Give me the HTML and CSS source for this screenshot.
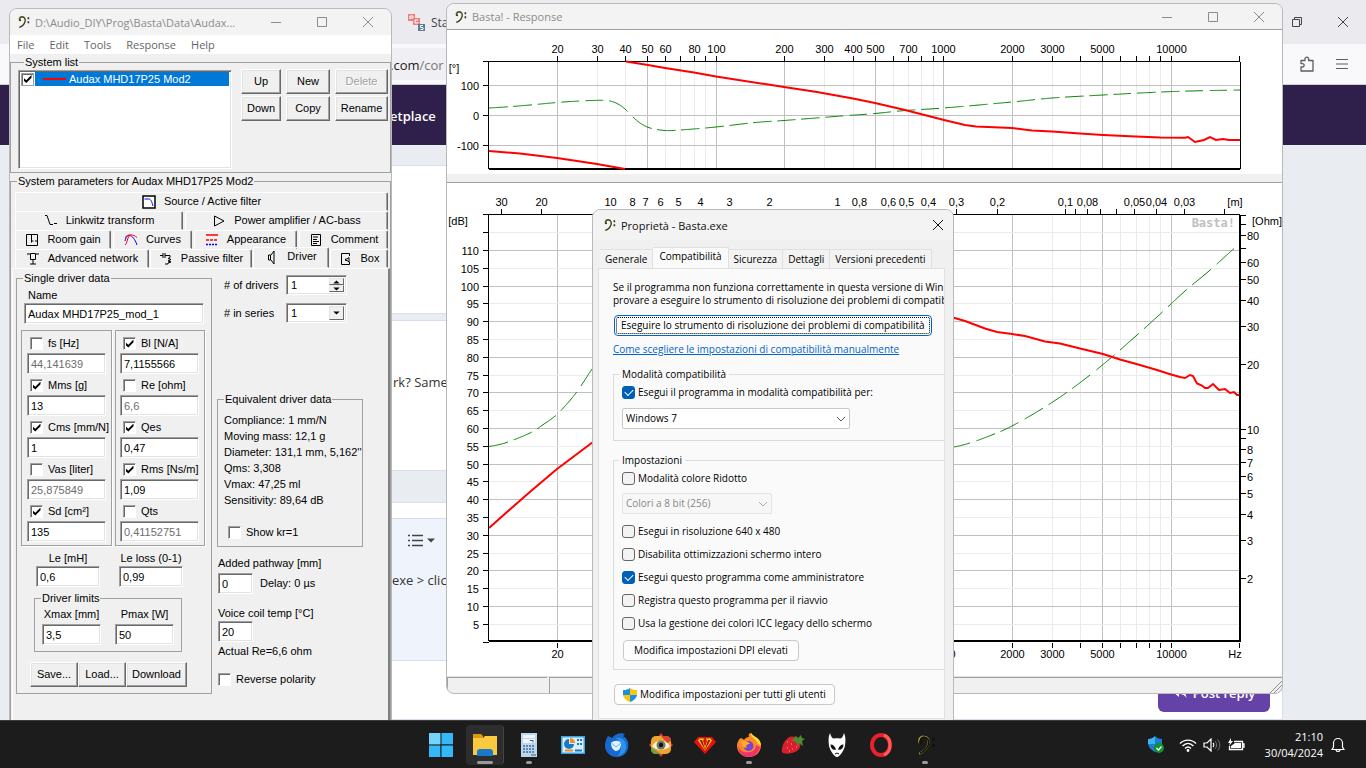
FILE: index.html
```html
<!DOCTYPE html>
<html lang="it">
<head>
<meta charset="utf-8">
<title>Basta!</title>
<link rel="stylesheet" href="styles.css">
</head>
<body>
<svg class="defs" aria-hidden="true">
  <symbol id="clef" viewBox="0 0 16 16">
    <path d="M3 6.5C1.6 3 4 1 6.5 1.3C10 1.6 10.800 5 9.500 8.500C8.500 11 6 13.500 2.500 15" fill="none" stroke="#b9a827" stroke-width="1.600"/>
    <path d="M3.600 6.500C2.500 3.500 4.500 1.600 6.500 1.700C9.800 2 10.800 5 9.800 8C8.800 11 6.500 13.300 3 14.600" fill="none" stroke="currentColor" stroke-width="1.300"/>
    <circle cx="3.800" cy="5.800" r="1.200" fill="currentColor"/>
    <path d="M13 2h2v2.500h-2zM13 7h2v2.500h-2z" fill="currentColor"/>
  </symbol>
  <symbol id="cross" viewBox="0 0 12 12"><path d="M1 1L11 11M11 1L1 11" fill="none" stroke="currentColor"/></symbol>
  <symbol id="minimize" viewBox="0 0 12 12"><path d="M1 6.500H11" fill="none" stroke="currentColor"/></symbol>
  <symbol id="maximize" viewBox="0 0 12 12"><path d="M1.500 1.500h9v9h-9z" fill="none" stroke="currentColor"/></symbol>
  <symbol id="chevron" viewBox="0 0 10 10"><path d="M1 3l4 4 4-4" fill="none" stroke="currentColor"/></symbol>
</svg>

<main class="desktop">
  <section class="browser" aria-label="Browser">
    <div class="tabstrip">
      <div class="browser-tab">
        <svg width="17" height="17" viewBox="0 0 17 17"><path d="M0 0h7v7H0zM5 4h7v7H5z" fill="#ee8080"/><path d="M10 10h7v7h-7z" fill="#5c7d99"/><path d="M2 5V2h3v2H2M10 6H7v3h3V8M15 11.500h-2.500v2H15v2h-2.500" fill="none" stroke="#fff"/></svg>
        <span>Sta</span>
      </div>
      <div class="browser-controls">
        <button aria-label="Restore"><svg width="12" height="12" viewBox="0 0 12 12"><path d="M1.500 3.500h7v7h-7zM3.500 3V1.500h7v7H9" fill="none" stroke="currentColor"/></svg></button>
        <button aria-label="Close browser"><svg width="12" height="12"><use href="#cross"/></svg></button>
      </div>
    </div>
    <div class="toolbar">
      <span class="address">.com<i>/cor</i></span>
      <div class="toolbar-icons">
        <button aria-label="Extensions"><svg width="16" height="16" viewBox="0 0 16 16"><path d="M2 4.500h4V3a1.800 1.800 0 0 1 3.600 0v1.500H14v10.500H2v-4h1.500a1.700 1.700 0 0 0 0-3.400H2z" fill="none" stroke="currentColor" stroke-width="1.300" stroke-linejoin="round"/></svg></button>
        <button aria-label="Menu"><svg width="14" height="12" viewBox="0 0 14 12"><path d="M1 1.500h12M1 6h12M1 10.500h12" stroke="currentColor"/></svg></button>
      </div>
    </div>
    <nav class="site-header"><a href="#">etplace</a></nav>
    <div class="page">
      <div class="post post-top"></div>
      <div class="post post-mid">rk? Same</div>
      <div class="post post-editor">
        <div class="editor">
          <button class="list-button" aria-label="List"><svg width="28" height="14" viewBox="0 0 28 14"><path d="M0 1.500h2M0 6.500h2M0 11.500h2M4 1.500h11M4 6.500h11M4 11.500h11" stroke="currentColor" stroke-width="1.500"/><path d="M19 4.500h8l-4 4z" fill="currentColor"/></svg></button>
          <p>exe &gt; click</p>
        </div>
        <button class="reply"><svg width="14" height="12" viewBox="0 0 14 12"><path d="M0 5l6-5v3c5 0 7 3 7.500 8C12 8.500 10 7 6 7v3z" fill="currentColor"/></svg>Post reply</button>
      </div>
    </div>
  </section>

  <section class="window main-window" aria-label="Basta main window">
    <header class="titlebar">
      <svg class="title-icon"><use href="#clef"/></svg>
      <h1>D:\Audio_DIY\Prog\Basta\Data\Audax...</h1>
      <button aria-label="Minimize"><svg><use href="#minimize"/></svg></button>
      <button aria-label="Maximize"><svg><use href="#maximize"/></svg></button>
      <button aria-label="Close"><svg><use href="#cross"/></svg></button>
    </header>
    <nav class="menu"><a href="#">File</a><a href="#">Edit</a><a href="#">Tools</a><a href="#">Response</a><a href="#">Help</a></nav>
    <div class="classic">
      <fieldset class="system-list">
        <legend>System list</legend>
        <div class="listbox sunken">
          <label class="list-row"><input type="checkbox" class="tick" checked><span class="selected"><i></i>Audax MHD17P25 Mod2</span></label>
        </div>
        <div class="list-buttons">
          <button>Up</button><button>New</button><button disabled>Delete</button>
          <button>Down</button><button>Copy</button><button>Rename</button>
        </div>
      </fieldset>
      <fieldset class="parameters">
        <legend>System parameters for Audax MHD17P25 Mod2</legend>
        <div class="tabs">
          <div class="tab-row row-one">
            <button><svg viewBox="0 0 14 14"><path d="M1 1h12v12H1z" fill="#fff" stroke="#000" stroke-width="1.500"/><path d="M2.500 4h4c3 0 3.500 4 4.500 7" fill="none" stroke="#00f"/></svg>Source / Active filter</button>
          </div>
          <div class="tab-row row-two">
            <button><svg viewBox="0 0 14 14"><path d="M1 1.500h2l3 9h2M8 10.500h1m1-1h3" fill="none" stroke="#000"/></svg>Linkwitz transform</button>
            <button><svg viewBox="0 0 14 14"><path d="M2.500 2v10L12 7z" fill="none" stroke="#000"/></svg>Power amplifier / AC-bass</button>
          </div>
          <div class="tab-row row-three">
            <button><svg viewBox="0 0 14 14"><path d="M1.500 1.500h11v11h-11zM6.500 2v7.500M6.500 8h2M10 8h3" fill="none" stroke="#000"/></svg>Room gain</button>
            <button><svg viewBox="0 0 14 14"><path d="M1 8C2 3 4 2 6 2.500S11 6 13 12" fill="none" stroke="#00f"/><path d="M1 4.500C4 1 9 1 13 4.500M1 12C3 11 3 6 5 3" fill="none" stroke="red"/></svg>Curves</button>
            <button><svg viewBox="0 0 14 14"><path d="M1 2h12M1 7h3m1 0h3m1 0h3" stroke="red" stroke-width="1.500"/><path d="M1 11.500h2m1 0h2m1 0h2m1 0h2" stroke="#00f" stroke-width="1.500"/></svg>Appearance</button>
            <button><svg viewBox="0 0 14 14"><path d="M2.500 1.500h9v11h-9zM4 4h5M4 6.500h4M4 8.500h6M4 10.500h4" fill="none" stroke="#000"/></svg>Comment</button>
          </div>
          <div class="tab-row row-four">
            <button><svg viewBox="0 0 14 14"><path d="M1 2h3m6 0h3M4.500 1.500h5v6h-5zM7 8v4M4 12h6" fill="none" stroke="#000"/></svg>Advanced network</button>
            <button><svg viewBox="0 0 14 14"><path d="M1 3.500h3m0-2.500v5m2-5v5m0-2.500h5v2l-2 1 3 1-3 1.500 3 1-3 1v1h-3" fill="none" stroke="#000"/></svg>Passive filter</button>
            <button class="active"><svg viewBox="0 0 14 14"><path d="M3.500 5h2v5h-2zM6 5l3-4v13L6 10" fill="none" stroke="#000"/></svg>Driver</button>
            <button><svg viewBox="0 0 14 14"><path d="M10.500 4V1.500h-8v11h8V10M10 5.500L8 7h-1.500v1.500H8l2 1.500z" fill="none" stroke="#000"/></svg>Box</button>
          </div>
        </div>
        <div class="driver-page">
          <fieldset class="driver-data">
            <legend>Single driver data</legend>
            <label class="name-field">Name<input class="sunken" value="Audax MHD17P25_mod_1"></label>
            <div class="values">
              <div class="value-column">
                <div><label><input type="checkbox" class="tick">fs [Hz]</label><input class="sunken" aria-label="fs" value="44,141639" disabled></div>
                <div><label><input type="checkbox" class="tick" checked>Mms [g]</label><input class="sunken" aria-label="Mms" value="13"></div>
                <div><label><input type="checkbox" class="tick" checked>Cms [mm/N]</label><input class="sunken" aria-label="Cms" value="1"></div>
                <div><label><input type="checkbox" class="tick">Vas [liter]</label><input class="sunken" aria-label="Vas" value="25,875849" disabled></div>
                <div><label><input type="checkbox" class="tick" checked>Sd [cm²]</label><input class="sunken" aria-label="Sd" value="135"></div>
              </div>
              <div class="value-column">
                <div><label><input type="checkbox" class="tick" checked>Bl [N/A]</label><input class="sunken" aria-label="Bl" value="7,1155566"></div>
                <div><label><input type="checkbox" class="tick">Re [ohm]</label><input class="sunken" aria-label="Re" value="6,6" disabled></div>
                <div><label><input type="checkbox" class="tick" checked>Qes</label><input class="sunken" aria-label="Qes" value="0,47"></div>
                <div><label><input type="checkbox" class="tick" checked>Rms [Ns/m]</label><input class="sunken" aria-label="Rms" value="1,09"></div>
                <div><label><input type="checkbox" class="tick">Qts</label><input class="sunken" aria-label="Qts" value="0,41152751" disabled></div>
              </div>
            </div>
            <div class="pair inductance">
              <label>Le [mH]<input class="sunken" value="0,6"></label>
              <label>Le loss (0-1)<input class="sunken" value="0,99"></label>
            </div>
            <fieldset class="limits">
              <legend>Driver limits</legend>
              <div class="pair">
                <label>Xmax [mm]<input class="sunken" value="3,5"></label>
                <label>Pmax [W]<input class="sunken" value="50"></label>
              </div>
            </fieldset>
            <div class="file-buttons"><button>Save...</button><button>Load...</button><button>Download</button></div>
          </fieldset>
          <div class="side">
            <div class="counts">
              <label for="drivers"># of drivers</label>
              <div class="combo sunken"><input id="drivers" value="1"><span class="spin"><button aria-label="More"><svg viewBox="0 0 8 5"><path d="M0 4.500h8L4 .5z"/></svg></button><button aria-label="Less"><svg viewBox="0 0 8 5"><path d="M0 .5h8L4 4.500z"/></svg></button></span></div>
              <label for="series"># in series</label>
              <div class="combo sunken"><select id="series"><option>1</option></select><span class="drop"><svg viewBox="0 0 8 5"><path d="M0 .5h8L4 4.500z"/></svg></span></div>
            </div>
            <fieldset class="equivalent">
              <legend>Equivalent driver data</legend>
              <p>Compliance: 1 mm/N</p><p>Moving mass: 12,1 g</p><p>Diameter: 131,1 mm, 5,162''</p><p>Qms: 3,308</p><p>Vmax: 47,25 ml</p><p>Sensitivity: 89,64 dB</p>
              <label><input type="checkbox" class="tick">Show kr=1</label>
            </fieldset>
            <div class="extras">
              <label for="path">Added pathway [mm]</label>
              <div class="delay"><input id="path" class="sunken" value="0"><span>Delay: 0 µs</span></div>
              <label for="temp">Voice coil temp [°C]</label>
              <input id="temp" class="sunken" value="20">
              <p>Actual Re=6,6 ohm</p>
              <label class="polarity"><input type="checkbox" class="tick">Reverse polarity</label>
            </div>
          </div>
        </div>
      </fieldset>
    </div>
  </section>

  <section class="window response-window" aria-label="Basta response">
    <header class="titlebar">
      <svg class="title-icon"><use href="#clef"/></svg>
      <h2>Basta! - Response</h2>
      <button aria-label="Minimize"><svg><use href="#minimize"/></svg></button>
      <button aria-label="Maximize"><svg><use href="#maximize"/></svg></button>
      <button aria-label="Close"><svg><use href="#cross"/></svg></button>
    </header>
    <svg class="chart" id="phase" viewBox="0 0 835 144" role="img" aria-label="Phase"></svg>
    <div class="splitter"></div>
    <svg class="chart" id="level" viewBox="0 0 835 493" role="img" aria-label="Sound level and impedance"></svg>
    <footer class="status"><span></span><span><svg width="12" height="12" viewBox="0 0 12 12"><path d="M0 12L12 0M4 12l8-8M8 12l4-4" stroke="#909090"/></svg></span></footer>
  </section>

  <section class="window properties" aria-label="Proprietà">
    <header class="titlebar">
      <svg class="title-icon"><use href="#clef"/></svg>
      <h2>Proprietà - Basta.exe</h2>
      <button aria-label="Chiudi"><svg><use href="#cross"/></svg></button>
    </header>
    <div class="dialog">
      <div class="dialog-tabs"><button>Generale</button><button class="active">Compatibilità</button><button>Sicurezza</button><button>Dettagli</button><button>Versioni precedenti</button></div>
      <div class="panel">
        <p>Se il programma non funziona correttamente in questa versione di Wind<br>provare a eseguire lo strumento di risoluzione dei problemi di compatibil</p>
        <button class="push focused">Eseguire lo strumento di risoluzione dei problemi di compatibilità</button>
        <a href="#">Come scegliere le impostazioni di compatibilità manualmente</a>
        <fieldset class="mode">
          <legend>Modalità compatibilità</legend>
          <label><input type="checkbox" checked>Esegui il programma in modalità compatibilità per:</label>
          <div class="picker"><select aria-label="Versione di Windows"><option>Windows 7</option></select><svg><use href="#chevron"/></svg></div>
        </fieldset>
        <fieldset class="settings">
          <legend>Impostazioni</legend>
          <label><input type="checkbox">Modalità colore Ridotto</label>
          <div class="picker colors"><select aria-label="Colori" disabled><option>Colori a 8 bit (256)</option></select><svg><use href="#chevron"/></svg></div>
          <label><input type="checkbox">Esegui in risoluzione 640 x 480</label>
          <label><input type="checkbox">Disabilita ottimizzazioni schermo intero</label>
          <label><input type="checkbox" checked>Esegui questo programma come amministratore</label>
          <label><input type="checkbox">Registra questo programma per il riavvio</label>
          <label><input type="checkbox">Usa la gestione dei colori ICC legacy dello schermo</label>
          <button class="push">Modifica impostazioni DPI elevati</button>
        </fieldset>
        <button class="push users"><svg width="14" height="14" viewBox="0 0 14 14"><path d="M7 0v7H0V2c3 0 5-.500 7-2z" fill="#1b8fe0"/><path d="M7 0v7h7V2c-3 0-5-.500-7-2zM0 7h7v7C3 12.500.500 10 0 7z" fill="#f9c80e"/><path d="M14 7H7v7c4-1.500 6.500-4 7-7z" fill="#1b8fe0"/></svg>Modifica impostazioni per tutti gli utenti</button>
      </div>
    </div>
  </section>
</main>

<footer class="taskbar">
  <nav class="apps">
    <button aria-label="Start"><svg viewBox="0 0 24 24"><path d="M0 0h11.300v11.300H0zM12.500 0H24v11.300H12.500zM0 12.500h11.300V24H0zM12.500 12.500H24V24H12.500z" fill="#35b8f7"/><path d="M0 0h11.300v11.300H0z" fill="#74d4fb"/></svg></button>
    <button class="focused" aria-label="Explorer"><svg viewBox="0 0 24 24"><path d="M0 1h8l2 2v4H0z" fill="#dd9b10"/><path d="M0 5h10l2-2h12v19H0z" fill="#fcca3e"/><path d="M4 23v-4c0-2 1-3 3-3h10c2 0 3 1 3 3v4z" fill="#1c78c8"/></svg></button>
    <button class="running" aria-label="Calculator"><svg viewBox="0 0 24 24"><path d="M4 0h16v24H4z" fill="#bcd6ec"/><path d="M6 2h12v3H6zM6 6h12v4H6z" fill="#edf6fc"/><path d="M6 13h12M6 16h12M6 19h12" stroke="#5f86ae" stroke-width="2" stroke-dasharray="2 1"/><path d="M13 7.500h3v2M14 22h5" stroke="#335f94" fill="none"/></svg></button>
    <button aria-label="Control panel"><svg viewBox="0 0 24 24"><path d="M0 3h24v18H0z" fill="#3aa4e3"/><path d="M1.500 4.500h21v15h-21z" fill="#d9effb"/><path d="M8 6a5 5 0 1 0 5 5H8z" fill="#1979c6"/><path d="M9 5a5 5 0 0 1 5 5H9z" fill="#f58c20"/><path d="M16 7h2m1 0h2m-5 4h2m1 0h2" stroke="#1979c6" stroke-width="2"/><path d="M4 17.500h8" stroke="#f58c20" stroke-width="2"/><path d="M14 17.500h7" stroke="#1979c6" stroke-width="2"/></svg></button>
    <button aria-label="Thunderbird"><svg viewBox="0 0 24 24"><path d="M3 3l4 2c3-4 8-6 13-4l-2 2c5 3 6 7 5 12-1 6-6 9-11 9C5 24 0 19 0 13c0-4 1-7 3-10z" fill="#1968cf"/><path d="M11 5c6-1 11 3 10 10-1 5-4 7-8 8 4-5 4-14-2-18z" fill="#2a94ef"/><path d="M6 10c3-3 8-3 10 0 0 5-2 8-5 8-3-.500-5-4-5-8z" fill="#dff1fe"/><path d="M6.500 10l4.500 4 5-4" fill="none" stroke="#71b5eb"/></svg></button>
    <button aria-label="Viewer"><svg viewBox="0 0 24 24"><path d="M12 0l3 4h-6zM12 24l-3-4h6zM0 12l3-3v6zM24 12l-3-3v6z" fill="#e23c28"/><rect x="2" y="3" width="20" height="18" rx="5" fill="#efa52c"/><path d="M12 3h5c3 0 5 2 5 5l-4 2z" fill="#d8442c"/><path d="M2 14l10 7H7c-3 0-5-2-5-5z" fill="#6e9e3f"/><path d="M3 13C7 6 17 6 21 13 17 18 7 18 3 13z" fill="#f6f1df"/><circle cx="12" cy="12" r="4.500" fill="#6f7865"/><circle cx="12" cy="12" r="2.200" fill="#111"/></svg></button>
    <button aria-label="Diamond"><svg viewBox="0 0 24 24"><path d="M5 4h14l4 5-11 12L1 9z" fill="#e61010"/><path d="M5 7.500l1.500-2H11L10 8l2 6 2-6-1-2.500h4.500l1.500 2-7 10z" fill="#f2d713"/><path d="M6.500 7h2.500l3 9 3-9h2.500L12 17z" fill="#a00c0c"/></svg></button>
    <button class="running" aria-label="Firefox"><svg viewBox="0 0 24 24"><path d="M4 5c1 0 2 1 3 2 1-2 3-3 5-3-1-2 0-4 2-4 2 4 9 4 10 12 0 7-5 12-12 12S0 19 0 13c0-4 2-7 4-8z" fill="#ff8a24"/><path d="M1 12c2 7 7 8 12 7 4-1 6-4 6-7l4 2c-1 6-6 10-11 10C6 24 1 20 1 12z" fill="#f2326b"/><path d="M14 0c2 4 9 4 10 12l-3-1c-1-5-8-6-7-11z" fill="#ffdd35"/><circle cx="11.500" cy="13" r="5" fill="#7b42d6"/><path d="M4 8c4-1 8 1 9 3-3 0-5 2-3 4-4 0-6-3-6-7z" fill="#ffab2b"/></svg></button>
    <button aria-label="Strawberry"><svg viewBox="0 0 24 24"><path d="M7 5c4-3 10-1 12 4 2 6-3 10-8 11-4 1-9 1-10-1S2 8 7 5z" fill="#d91f2b"/><path d="M12 6l3-3 2 2 3-3 1 3 3 1-3 2 1 5-4-3-1 4-2-5-4-1z" fill="#4f8b2e"/><path d="M6 9h1m3 2h1m-5 4h1m4 1h1m3-2h1M8 18h1" stroke="#f8a0a0"/></svg></button>
    <button aria-label="foobar2000"><svg viewBox="0 0 24 24"><path d="M5 0c1 4 3 6 4 5.500 2-.500 4-.500 6 0 1 .500 3-1.500 4-5.500 2 4 1.500 8 1 13-1 4-5 11-8 11S5 17 4 13C3.500 8 3 4 5 0z" fill="#fff"/><path d="M5.500 11.500c3 0 4.500 2 5.500 5-3 1-5.500-1-5.500-5zM18.500 11.500c-3 0-4.500 2-5.500 5 3 1 5.500-1 5.500-5z" fill="#111"/><path d="M10 21l2-1 2 1" fill="none" stroke="#111"/></svg></button>
    <button aria-label="Opera"><svg viewBox="0 0 24 24"><ellipse cx="12" cy="12" rx="9" ry="10" fill="none" stroke="#e9202f" stroke-width="4"/><path d="M15 2c8 3 8 17 0 20" fill="none" stroke="#ff5a58" stroke-width="3"/></svg></button>
    <button class="running clef" aria-label="Basta"><svg viewBox="0 0 24 24"><use href="#clef" x="3" y="1" width="20" height="22"/></svg></button>
  </nav>
  <div class="tray">
    <svg width="18" height="18" viewBox="0 0 18 18"><path d="M8 0v8H1V3c3 0 5-1 7-3z" fill="#3cb4f2"/><path d="M8 0v8h7V3C12 3 10 2 8 0zM1 8h7v8C4 14 1.500 11 1 8z" fill="#1a7fd4"/><path d="M15 8H8v8c4-2 6.500-5 7-8z" fill="#0f5eb0"/><circle cx="12" cy="12" r="5" fill="#15912e"/><path d="M9.500 12l2 2 3-3.500" fill="none" stroke="#fff" stroke-width="1.300"/></svg>
    <svg class="wifi" width="18" height="14" viewBox="0 0 18 14"><path d="M1 5.500C5.500 1 12.500 1 17 5.500M3.500 8C7 4.500 11 4.500 14.500 8M6 10.500c2-2 4-2 6 0" fill="none" stroke="#fff" stroke-width="1.400"/><circle cx="9" cy="12.500" r="1.400" fill="#fff"/></svg>
    <svg width="18" height="14" viewBox="0 0 18 14"><path d="M1 5h3l4-4v12L4 9H1zM10 5c1 1 1 3 0 4" fill="none" stroke="#fff" stroke-width="1.200"/><path d="M12 3c2 2 2 6 0 8M14.500 1.500c3 3 3 8 0 11" fill="none" stroke="#777"/></svg>
    <svg width="18" height="14" viewBox="0 0 18 14"><path d="M7 3.500h8.500v8h-13V8M16 6h1v3h-1" fill="none" stroke="#fff" stroke-width="1.300"/><path d="M8 5h6v5H4V8z" fill="#fff"/><path d="M4 0L1 5h2L2 8l4-5H4z" fill="#fff"/></svg>
    <time>21:10<br>30/04/2024</time>
    <svg width="14" height="16" viewBox="0 0 14 16"><path d="M1 12.500h12L11.500 10V6a4.500 4.500 0 0 0-9 0v4zM5 13c.500 2 3.500 2 4 0" fill="none" stroke="#fff" stroke-width="1.200"/></svg>
  </div>
</footer>
<script src="charts.js"></script>
</body>
</html>
```
FILE: styles.css
```css
* { box-sizing: border-box; }
body {
  margin: 0;
  height: 100vh;
  display: grid;
  grid-template-rows: 1fr 48px;
  overflow: hidden;
  font: 11px/13px "Liberation Sans", sans-serif;
  color: #000;
}
button, input, select { font: inherit; color: inherit; margin: 0; padding: 0; }
button { background: none; border: 0; }
h1, h2, p { margin: 0; font: inherit; }
fieldset { margin: 0; padding: 0; border: 1px solid #a0a0a0; min-width: 0; }
legend { padding: 0 1px; margin-left: 6px; }
a { color: inherit; text-decoration: none; }
.defs { position: absolute; width: 0; height: 0; }
.desktop { position: relative; overflow: hidden; min-height: 0; }

/* Browser behind the windows */
.browser { height: 100%; display: flex; flex-direction: column; background: #e9edf2; font-family: "Open Sans", sans-serif; }
.tabstrip { height: 44px; background: #eaeaef; display: flex; justify-content: space-between; align-items: center; padding-left: 408px; color: #444; }
.browser-tab { display: flex; align-items: center; gap: 6px; font-size: 12px; }
.browser-controls { display: flex; }
.browser-controls button { width: 46px; height: 32px; display: grid; place-items: center; }
.toolbar { height: 41px; background: #f9f9fb; border-bottom: 1px solid #d0d0d6; display: flex; justify-content: space-between; align-items: center; padding-left: 390px; }
.address { background: #f0f0f4; height: 32px; width: 800px; font-size: 13px; line-height: 34px; color: #222; }
.address i { font-style: normal; color: #777; }
.toolbar-icons { display: flex; gap: 20px; padding-right: 17px; color: #5b5b66; align-items: center; }
.toolbar-icons svg { display: block; }
.site-header { height: 60px; background: #2f1f4b; padding-left: 390px; line-height: 62px; font-size: 13px; font-weight: 600; color: #fff; }
.page { flex: 1; margin: 0 83px 0 380px; padding-top: 15px; display: flex; flex-direction: column; background: #e9edf2; color: #333; font-size: 13px; }
.post { background: #fff; border: 1px solid #d5dff0; border-left: 0; padding-left: 13px; }
.post-top { height: 149px; margin-top: 5px; }
.post-mid { height: 151px; margin-top: 6px; line-height: 122px; }
.post-editor { flex: 1; margin-top: 31px; padding: 15px 0 0; display: flex; flex-direction: column; }
.editor { height: 143px; background: #eff3fb; border-top: 1px solid #d5dff0; border-bottom: 1px solid #d5dff0; padding: 15px 0 0 12px; }
.editor p { line-height: 18px; margin-top: 23px; }
.list-button { display: block; margin-left: 16px; height: 14px; color: #444; }
.list-button svg { display: block; }
.reply { align-self: flex-end; margin: 13px 12px 0 0; width: 112px; height: 38px; border-radius: 6px; background: #6542a8; color: #fff; font-size: 13px; font-weight: 600; display: flex; gap: 6px; align-items: center; justify-content: center; }

/* Windows */
.window { position: absolute; border: 1px solid #b9b9b9; border-radius: 8px 8px 0 0; overflow: hidden; background: #f0f0f0; display: flex; flex-direction: column; }
.main-window { left: 9px; top: 8px; width: 383px; bottom: -10px; }
.response-window { left: 446px; top: 3px; width: 837px; height: 691px; border-radius: 8px; }
.properties { left: 592px; top: 209px; width: 362px; bottom: -10px; }
.titlebar { flex: none; height: 26px; display: flex; align-items: center; padding-left: 7px; background: #f3f3f3; color: #8c8c8c; font-family: "Open Sans", sans-serif; }
.titlebar h1, .titlebar h2 { flex: 1; margin-left: 5px; white-space: nowrap; font-size: 11px; }
.title-icon { width: 13px; height: 14px; color: #333; }
.titlebar button { width: 46px; height: 24px; display: grid; place-items: center; }
.titlebar button svg { width: 12px; height: 12px; }
.menu { flex: none; height: 19px; background: #fff; display: flex; gap: 15px; align-items: center; padding-left: 7px; color: #666; font: 11px "Open Sans", sans-serif; }

/* Classic controls */
.classic { flex: 1; padding-top: 2px; }
.sunken { background: #fff; border: 1px solid; border-color: #a0a0a0 #fff #fff #a0a0a0; box-shadow: inset 1px 1px #696969, inset -1px -1px #e3e3e3; border-radius: 0; outline: 0; }
input.sunken { display: block; height: 21px; padding: 0 3px; }
input.sunken:disabled { color: #6d6d6d; }
.tick { appearance: none; width: 13px; height: 13px; flex: none; background: #fff; border: 1px solid; border-color: #a0a0a0 #fff #fff #a0a0a0; box-shadow: inset 1px 1px #696969; display: grid; place-items: center; }
.tick:checked::before { content: ""; width: 8px; height: 8px; background: #000; clip-path: polygon(0 35%, 35% 65%, 100% 0, 100% 35%, 35% 100%, 0 70%); }
.classic label { display: flex; align-items: center; }
.list-buttons button, .file-buttons button { background: #f0f0f0; border: 1px solid; border-color: #fff #696969 #696969 #fff; box-shadow: inset -1px -1px #a0a0a0, inset 1px 1px #e3e3e3; }
.system-list { height: 117px; display: flex; padding-left: 7px; padding-right: 2px; }
.listbox { width: 214px; height: 99px; margin-top: 1px; padding: 1px 2px; }
.list-row .tick { border-color: #a0a0a0; }
.selected { flex: 1; margin-left: 1px; height: 14px; line-height: 15px; background: #0078d7; color: #fff; display: flex; align-items: center; }
.selected i { width: 23px; height: 2px; margin: 0 3px 0 8px; background: red; }
.list-buttons { flex: 1; margin-left: 9px; display: grid; grid-template-columns: 40px 44px 1fr; grid-auto-rows: 25px; gap: 2px 5px; }
.list-buttons button:disabled { color: #a0a0a0; text-shadow: 1px 1px #fff; }
.parameters { margin-top: 2px; height: 560px; }
.tabs { padding: 4px 2px 0 4px; }
.tab-row { display: grid; height: 19px; gap: 2px; }
.row-two { grid-template-columns: 168px 1fr; }
.row-three { grid-template-columns: 96px 79px 103px 1fr; }
.row-four { grid-template-columns: 134px 102px 76px 1fr; gap: 0 1px; }
.tab-row button { display: flex; align-items: center; justify-content: center; gap: 8px; border: 1px solid; border-color: #fff #696969 transparent #fff; box-shadow: inset -1px 0 #a0a0a0; border-radius: 2px 2px 0 0; white-space: nowrap; }
.tab-row svg { width: 14px; height: 14px; }
.tab-row .active { margin-top: -2px; padding-bottom: 2px; }
.driver-page { height: 470px; margin-left: 1px; padding: 3px 0 0 3px; display: flex; border: solid; border-width: 1px 2px 0 1px; border-color: #fff #808080 #fff #fff; }
.driver-data { width: 196px; height: 422px; }
.name-field { margin: 4px 7px 0; flex-direction: column; }
.classic .name-field { align-items: stretch; text-indent: 4px; gap: 1px; }
.name-field input { width: 100%; text-indent: 0; }
.values { display: grid; grid-template-columns: 91px 90px; gap: 3px; margin: 6px 0 0 4px; }
.value-column { height: 216px; border: 1px solid #a0a0a0; box-shadow: 1px 1px #fff; padding: 2px 5px; display: grid; grid-template-rows: repeat(5, 1fr); }
.value-column + .value-column { padding-left: 4px; }
.value-column > div { display: flex; flex-direction: column; justify-content: center; }
.value-column label { height: 19px; gap: 5px; padding-left: 3px; white-space: nowrap; }
.value-column input.sunken { width: 79px; }
.pair { display: flex; }
.classic .pair label { flex-direction: column; gap: 1px; }
.inductance { margin: 6px 0 0 19px; gap: 19px; }
.inductance input { width: 64px; }
.limits { width: 148px; margin: 5px 0 0 17px; height: 60px; }
.limits .pair { margin: 3px 0 0 7px; gap: 14px; }
.limits input { width: 59px; }
.classic .limits .pair label { gap: 3px; }
.file-buttons { display: grid; grid-template-columns: 48px 48px 61px; margin: 10px 0 0 13px; height: 25px; }
.side { margin-left: 5px; }
.counts { display: grid; grid-template-columns: 62px 61px; gap: 8px 0; margin-left: 7px; padding-top: 3px; }
.combo { height: 20px; padding: 2px; display: flex; }
.combo input, .combo select { flex: 1; min-width: 0; border: 0; background: none; appearance: none; outline: 0; padding-left: 2px; }
.spin, .drop { width: 15px; display: grid; }
.spin button, .drop { background: #f0f0f0; border: 1px solid; border-color: #e3e3e3 #696969 #696969 #e3e3e3; display: grid; place-items: center; }
.spin svg, .drop svg { width: 7px; height: 4px; display: block; }
.equivalent { width: 146px; height: 154px; margin-top: 70px; padding-left: 6px; line-height: 16px; }
.equivalent legend { line-height: 13px; margin-left: 0; }
.equivalent p { white-space: nowrap; }
.equivalent p:first-of-type { margin-top: 6px; }
.equivalent label { gap: 5px; margin: 16px 0 0 4px; }
.extras { margin: 10px 0 0 1px; }
.delay { display: flex; align-items: center; gap: 7px; margin: 3px 0 13px; }
.extras input.sunken { width: 35px; }
#temp { margin: 1px 0 3px; }
.classic .polarity { gap: 5px; margin-top: 15px; }

/* Response window */
.response-window .titlebar { border-bottom: 1px solid #a0a0a0; }
.chart { display: block; width: 100%; background: #fff; font: 11px "Liberation Sans", sans-serif; }
.chart .minor { stroke: #ebebeb; }
.chart .major { stroke: #c0c0c0; }
.chart .axis { stroke: #000; fill: none; }
.chart .grid { shape-rendering: crispEdges; }
.chart .red { stroke: red; stroke-width: 2; fill: none; }
.chart .green { stroke: #008000; fill: none; }
.chart .mark { font: bold 12px "DejaVu Sans Mono", monospace; fill: #c0c0c0; }
.splitter { height: 9px; border-bottom: 1px solid #a0a0a0; background: #f0f0f0; }
.status { flex: 1; display: grid; grid-template-columns: 100px 1fr; gap: 2px; border-top: 1px solid #e0e0e0; }
.status span { border: solid #a0a0a0; border-width: 1px 0 0 1px; display: flex; justify-content: flex-end; align-items: flex-end; }

/* Properties dialog */
.properties .titlebar { height: 30px; padding-left: 10px; color: #111; }
.properties .titlebar button { width: 30px; }
.dialog { flex: 1; padding: 7px 8px 0 5px; font-family: "Open Sans", sans-serif; font-size: 10px; }
.dialog-tabs { display: flex; align-items: flex-end; height: 21px; padding-left: 2px; }
.dialog-tabs button { height: 19px; padding: 0 5px; border: 1px solid #e0e0e0; border-width: 1px 1px 0 0; background: #f3f3f3; white-space: nowrap; }
.dialog-tabs .active { height: 21px; padding: 0 6px 3px; background: #fafafa; }
.panel { height: 451px; border: 1px solid #e0e0e0; background: #fafafa; padding: 12px 0 0 14px; overflow: hidden; white-space: nowrap; display: flex; flex-direction: column; align-items: flex-start; }
.panel a { color: #0066cc; text-decoration: underline; margin-top: 7px; }
.push { height: 21px; border: 1px solid #c8c8c8; border-radius: 4px; background: #fdfdfd; padding: 0 10px; display: flex; align-items: center; gap: 3px; }
.focused.push { margin: 8px 0 0 1px; padding: 0 6px; border-color: #0067c0; outline: 1px dotted #000; outline-offset: -3px; }
.panel fieldset { width: 100%; border: 1px solid #dcdcdc; border-right: 0; padding-left: 8px; }
.panel legend { padding: 0 3px; margin-left: -3px; }
.mode { height: 73px; margin-top: 12px; }
.settings { height: 216px; margin-top: 13px; }
.panel label { display: flex; align-items: center; gap: 3px; height: 13px; }
.panel input { appearance: none; width: 13px; height: 13px; border: 1px solid #666; border-radius: 3px; background: #f3f3f3; display: grid; place-items: center; }
.panel input:checked { background: #005fb8; border-color: #005fb8; }
.panel input:checked::before { content: ""; width: 7px; height: 4px; border: solid #fff; border-width: 0 0 1px 1px; rotate: -45deg; margin-bottom: 2px; }
.mode label, .settings legend + label { margin-top: 5px; }
.picker { position: relative; width: 228px; height: 21px; margin-top: 9px; }
.picker select { appearance: none; width: 100%; height: 100%; border: 1px solid #c8c8c8; border-radius: 2px; background: #fff; padding-left: 3px; opacity: 1; }
.picker svg { position: absolute; right: 4px; top: 6px; width: 10px; height: 10px; color: #555; }
.colors { width: 150px; margin: 8px 0 11px; color: #888; }
.colors select { background: #f7f7f7; border-color: #e3e3e3; }
.colors svg { color: #aaa; }
.settings label ~ label { margin-bottom: 10px; }
.settings .push { margin-left: 1px; }
.users { margin: 14px 0 0 1px; padding: 0 8px; }

/* Taskbar */
.taskbar { background: #1c1c1c; border-top: 1px solid #3a3a3a; display: grid; grid-template-columns: 1fr auto 1fr; color: #fff; font: 11px/16px "Open Sans", sans-serif; }
.apps { grid-column: 2; display: grid; grid-template-columns: repeat(12, 44px); align-items: center; }
.apps button { position: relative; height: 40px; display: grid; place-items: center; border-radius: 4px; }
.apps button svg { width: 24px; height: 24px; }
.apps .clef { color: #111; }
.apps .focused { background: #2d2d2d; border-right: 1px solid #444; width: 38px; justify-self: center; }
.apps .running::after, .apps .focused::after { content: ""; position: absolute; bottom: 1px; width: 6px; height: 3px; border-radius: 2px; background: #9a9a9a; }
.apps .focused::after { width: 16px; }
.tray { display: flex; justify-content: flex-end; align-items: center; gap: 6px; padding-right: 21px; }
.wifi { margin-left: 8px; }
.tray time { text-align: right; margin: 0 2px 0 14px; }
```
FILE: charts.js
```js
const NS = "http://www.w3.org/2000/svg";

function add(svg, tag, attrs, text) {
  const node = document.createElementNS(NS, tag);
  for (const key in attrs) node.setAttribute(key, attrs[key]);
  if (text !== undefined) node.textContent = text;
  svg.appendChild(node);
}
const line = (svg, x1, y1, x2, y2, cls) =>
  add(svg, "path", { d: `M${x1} ${y1}L${x2} ${y2}`, class: `grid ${cls}` });
const label = (svg, x, y, text, anchor = "middle") =>
  add(svg, "text", { x, y: y + 4, "text-anchor": anchor }, text);
const snap = (v) => Math.floor(v) + 0.5;

const LEFT = 41.5, RIGHT = 793, DECADE = 227.6;
const freqX = (f) => snap(LEFT + DECADE * (Math.log10(f) - 1));
const FREQS = [20, 30, 40, 50, 60, 70, 80, 90, 100, 200, 300, 400, 500, 600, 700, 800, 900,
  1000, 2000, 3000, 4000, 5000, 6000, 7000, 8000, 9000, 10000];
const isMajor = (f) => /^[125]0*$/.test(String(f));

function curve(svg, points) {
  add(svg, "path", { class: "red", d: "M" + points.map((p) => p.join(" ")).join("L") });
}

/* Dashes advance along the longer axis of each step, 18 on and 6 off. */
function dashed(svg, points) {
  let d = "", travelled = 0;
  for (let i = 1; i < points.length; i++) {
    const [x1, y1] = points[i - 1], [x2, y2] = points[i];
    const length = Math.max(Math.abs(x2 - x1), Math.abs(y2 - y1));
    const steps = Math.ceil(length);
    for (let s = 0; s < steps; s++, travelled += length / steps) {
      if (travelled % 24 >= 18) continue;
      const at = (t) => `${(x1 + (x2 - x1) * t).toFixed(2)} ${(y1 + (y2 - y1) * t).toFixed(2)}`;
      d += `M${at(s / steps)}L${at((s + 1) / steps)}`;
    }
  }
  add(svg, "path", { class: "green", d });
}

/* Smooths a list of points with a Catmull-Rom spline. */
function smooth(points) {
  const out = [];
  for (let i = 0; i < points.length - 1; i++) {
    const a = points[Math.max(i - 1, 0)], b = points[i], c = points[i + 1];
    const e = points[Math.min(i + 2, points.length - 1)];
    for (let t = 0; t < 1; t += 0.25) {
      const m = (k) => 0.5 * (2 * b[k] + (c[k] - a[k]) * t +
        (2 * a[k] - 5 * b[k] + 4 * c[k] - e[k]) * t * t +
        (3 * b[k] - a[k] - 3 * c[k] + e[k]) * t * t * t);
      out.push([m(0), m(1)]);
    }
  }
  out.push(points[points.length - 1]);
  return out;
}

function drawPhase() {
  const svg = document.getElementById("phase");
  const top = 31.5, bottom = 139;
  for (const f of FREQS) line(svg, freqX(f), top, freqX(f), bottom, isMajor(f) ? "major" : "minor");
  for (const [deg, y] of [[100, 55.5], [0, 85.5], [-100, 115.5]]) {
    line(svg, LEFT, y, RIGHT, y, "major");
    line(svg, 36, y, LEFT, y, "axis");
    label(svg, 32, y, deg, "end");
  }
  for (const f of [...FREQS, 20000]) line(svg, freqX(f), 26, freqX(f), top, "axis");
  for (const f of [20, 30, 40, 50, 60, 80, 100, 200, 300, 400, 500, 700, 1000, 2000, 3000, 5000, 10000])
    label(svg, freqX(f), 19, f);
  label(svg, 7, 38, "[°]");
  line(svg, 36, top, RIGHT, top, "axis");
  line(svg, LEFT, top, LEFT, bottom, "axis");
  line(svg, RIGHT + 0.5, top, RIGHT + 0.5, bottom, "axis");
  add(svg, "path", { d: `M${LEFT} ${bottom}H${RIGHT}`, class: "grid axis", "stroke-width": 2 });
  dashed(svg, smooth([[42, 78], [58, 77], [83, 75], [110, 72.5], [133, 71], [153, 70.3], [163, 71], [171, 74],
    [178, 79], [185, 86], [193, 93], [203, 98], [218, 100.5], [233, 100], [269, 97], [308, 92.5], [337, 90.5],
    [388, 86.5], [428, 83.5], [458, 80.5], [497, 78], [565, 72], [605, 68], [656, 65], [703, 62.5], [743, 61], [793, 60]]));
  curve(svg, [[179, 31.5], [201, 35], [218, 38], [247, 42.5], [269, 46.5], [337, 57], [370, 62], [406, 68.5],
    [428, 73], [458, 80], [497, 90], [518, 95], [529, 96.5], [565, 98], [585, 100.5], [605, 101.5],
    [633, 103.5], [656, 105], [683, 106.3], [713, 107.5], [738, 107.8], [741, 107], [748, 112], [757, 110],
    [763, 107], [769, 110], [776, 109], [782, 110], [793, 110]]);
  curve(svg, [[42, 121], [73, 123.5], [110, 128], [150, 134], [178, 139]]);
}

function drawLevel() {
  const svg = document.getElementById("level");
  const top = 31.5, bottom = 458;
  const levelY = (db) => snap(459 - 3.56 * db);
  for (const f of FREQS) line(svg, freqX(f), top, freqX(f), bottom, isMajor(f) ? "major" : "minor");
  for (let db = 5; db <= 115; db += 5) {
    const y = levelY(db);
    line(svg, LEFT, y, RIGHT, y, db % 10 ? "minor" : "major");
    line(svg, 36, y, LEFT, y, "axis");
    if (db < 115) label(svg, 32, y, db, "end");
  }
  line(svg, 36, 459.5, LEFT, 459.5, "axis");
  for (const f of [...FREQS, 20000]) line(svg, freqX(f), 460, freqX(f), 465, "axis");
  for (const f of [20, 1000, 2000, 3000, 5000, 10000]) label(svg, freqX(f), 471, f);
  label(svg, 788, 471, "Hz");
  label(svg, 11, 38, "[dB]");

  const waveX = (m) => freqX(343 / m);
  for (const m of [30, 20, 10, 9, 8, 7, 6, 5, 4, 3, 2, 1, 0.9, 0.8, 0.7, 0.6, 0.5, 0.4, 0.3, 0.2, 0.1,
    0.09, 0.08, 0.07, 0.06, 0.05, 0.04, 0.03, 0.02]) line(svg, waveX(m), 26, waveX(m), top, "axis");
  for (const m of [30, 20, 10, 8, 7, 6, 5, 4, 3, 2, 1, 0.8, 0.6, 0.5, 0.4, 0.3, 0.2, 0.1, 0.08, 0.05, 0.04, 0.03])
    label(svg, waveX(m), 19, String(m).replace(".", ","));
  label(svg, 788, 19, "[m]");

  const ohmY = (r) => snap(246 - 214 * (Math.log10(r) - 1));
  for (const r of [2, 3, 4, 5, 6, 7, 8, 9, 10, 20, 30, 40, 50, 60, 70, 80, 90, 100])
    line(svg, 794, ohmY(r), 799, ohmY(r), "axis");
  for (const r of [2, 3, 4, 5, 6, 7, 8, 10, 20, 30, 40, 50, 60, 80]) label(svg, 800, ohmY(r), r, "start");
  label(svg, 820, 38, "[Ohm]");

  dashed(svg, smooth([[42, 263.5], [58, 260], [83, 250], [97, 241], [107, 234], [114, 227.5], [129, 210], [145, 186]]));
  dashed(svg, smooth([[505, 264.5], [523, 260], [546, 251.5], [565, 243], [593, 227], [619, 210], [643, 192],
    [665, 174], [690, 152], [710, 134], [738, 108], [762, 88], [787, 65.5]]));
  curve(svg, [[42, 345], [60, 329], [84, 308], [110, 286], [150, 256]]);
  curve(svg, [[500, 133], [506, 134.5], [518, 138], [538, 145.5], [550, 149], [565, 151], [578, 153],
    [598, 158.5], [613, 160.5], [633, 165.5], [656, 171], [673, 176.5], [693, 182], [710, 187], [724, 191.5],
    [733, 194], [738, 195], [743, 192], [746, 193], [750, 200.5], [755, 202.5], [758, 205], [761, 205], [766, 201],
    [772, 207], [778, 206], [783, 210], [787, 209], [790, 212], [793, 212]]);
  line(svg, 36, top, RIGHT, top, "axis");
  line(svg, LEFT, top, LEFT, bottom, "axis");
  add(svg, "path", { d: `M${LEFT} ${bottom}H${RIGHT}V${top}`, class: "grid axis", "stroke-width": 2 });
  add(svg, "text", { x: 788, y: 44, "text-anchor": "end", class: "mark" }, "Basta!");
}

drawPhase();
drawLevel();
```
